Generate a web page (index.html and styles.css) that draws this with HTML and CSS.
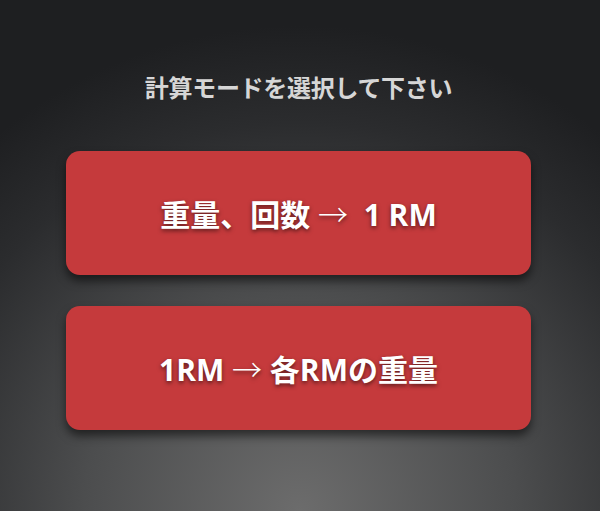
FILE: index.html
```html
<!DOCTYPE html>
<html lang="ja">
<head>
<meta charset="utf-8">
<link rel="stylesheet" href="styles.css">
</head>
<body>
<main class="screen">
  <h1 class="title">計算モードを選択して下さい</h1>
  <div class="buttons">
    <button class="mode">重量、回数 <span class="arrow">→</span>&nbsp; 1 RM</button>
    <button class="mode">1RM <span class="arrow">→</span> 各RMの重量</button>
  </div>
</main>
</body>
</html>
```
FILE: styles.css
```css
html, body {
  margin: 0;
  padding: 0;
}
body {
  width: 600px;
  height: 511px;
  overflow: hidden;
  background: radial-gradient(ellipse 80% 95% at 50% 100%, #6c6c6c 0%, #4c4d4e 45%, #2b2c2e 80%, #1e1f21 100%);
  font-family: "Noto Sans CJK JP", "Noto Sans", sans-serif;
}
.screen {
  display: flex;
  flex-direction: column;
  align-items: center;
  padding-top: 70px;
  padding-right: 3px;
}
.title {
  margin: 0;
  font-size: 24px;
  line-height: 34px;
  font-weight: 700;
  color: #d6d6d6;
  letter-spacing: -0.3px;
}
.buttons {
  display: flex;
  flex-direction: column;
  gap: 31px;
  margin-top: 47px;
}
.mode {
  width: 465px;
  height: 124px;
  border: none;
  border-radius: 14px;
  background: #c53a3c;
  color: #ffffff;
  font-family: "Open Sans", "Noto Sans CJK JP", sans-serif;
  font-size: 30px;
  font-weight: 700;
  text-shadow: 0 2px 4px rgba(0,0,0,0.55);
  box-shadow: 0 6px 10px rgba(0,0,0,0.55);
  padding: 0;
}
.arrow {
  font-family: "Noto Sans CJK JP", sans-serif;
  font-weight: 300;
}
```
